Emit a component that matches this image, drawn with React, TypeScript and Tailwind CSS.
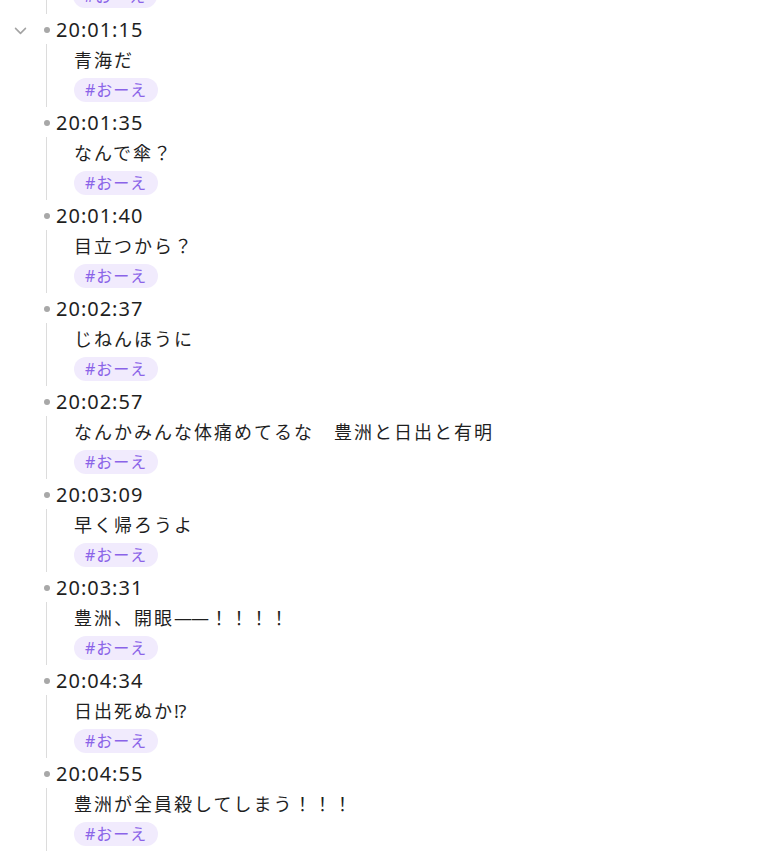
import React from 'react';

const items = [
  { time: '20:01:15', text: '青海だ', open: true },
  { time: '20:01:35', text: 'なんで傘？' },
  { time: '20:01:40', text: '目立つから？' },
  { time: '20:02:37', text: 'じねんほうに' },
  { time: '20:02:57', text: 'なんかみんな体痛めてるな　豊洲と日出と有明' },
  { time: '20:03:09', text: '早く帰ろうよ' },
  { time: '20:03:31', text: '豊洲、開眼——！！！！' },
  { time: '20:04:34', text: '日出死ぬか⁉' },
  { time: '20:04:55', text: '豊洲が全員殺してしまう！！！' },
];

const Tag = () => (
  <span className="inline-flex h-[24px] items-center rounded-full bg-[#f1ebfd] px-[11px] text-[16px] tracking-[1px] text-[#8a63e8]">
    #おーえ
  </span>
);

const Chevron = () => (
  <svg width="17" height="17" viewBox="0 0 24 24" fill="none" stroke="#a3a3a3" strokeWidth="2.2" strokeLinecap="round" strokeLinejoin="round">
    <path d="m5 9 7 7 7-7" />
  </svg>
);

// keep the em dashes joined into one line like the original
const Body = ({ text }: { text: string }) => {
  const parts = text.split(/(—+)/);
  return (
    <>
      {parts.map((p, i) =>
        p.startsWith('—') ? (
          <span key={i} className="mr-[2px] tracking-[-1px]">{p}</span>
        ) : (
          <span key={i}>{p}</span>
        ),
      )}
    </>
  );
};

export default function App() {
  return (
    <div className="min-h-screen overflow-hidden bg-white font-['Noto_Sans','Noto_Sans_CJK_JP',sans-serif] text-[#1f1f1f]">
      {/* tail of the previous entry */}
      <div className="ml-[46px] -mt-[16px] flex border-l border-[#dcdcdc] pb-[6px] pl-[26px]">
        <Tag />
      </div>
      <div className="flex flex-col">
        {items.map((item) => (
          <div key={item.time} className="flex flex-col">
            <div className="flex h-[30px] items-center pt-[2px]">
              <div className="flex w-[40px] justify-center pl-[1px]">
                {item.open && <Chevron />}
              </div>
              <div className="flex w-[13px] justify-center">
                <span className="h-[6px] w-[6px] rounded-full bg-[#a8a8a8]" />
              </div>
              <span className="ml-[3px] text-[20px] leading-none tracking-[1px]">{item.time}</span>
            </div>
            <div className="ml-[46px] flex flex-col items-start border-l border-[#dcdcdc] pb-[5px] pl-[27px]">
              <div className="flex h-[31px] items-center pt-[2px] text-[18px] tracking-[2px]">
                <Body text={item.text} />
              </div>
              <div className="mt-[3px]">
                <Tag />
              </div>
            </div>
          </div>
        ))}
      </div>
    </div>
  );
}
